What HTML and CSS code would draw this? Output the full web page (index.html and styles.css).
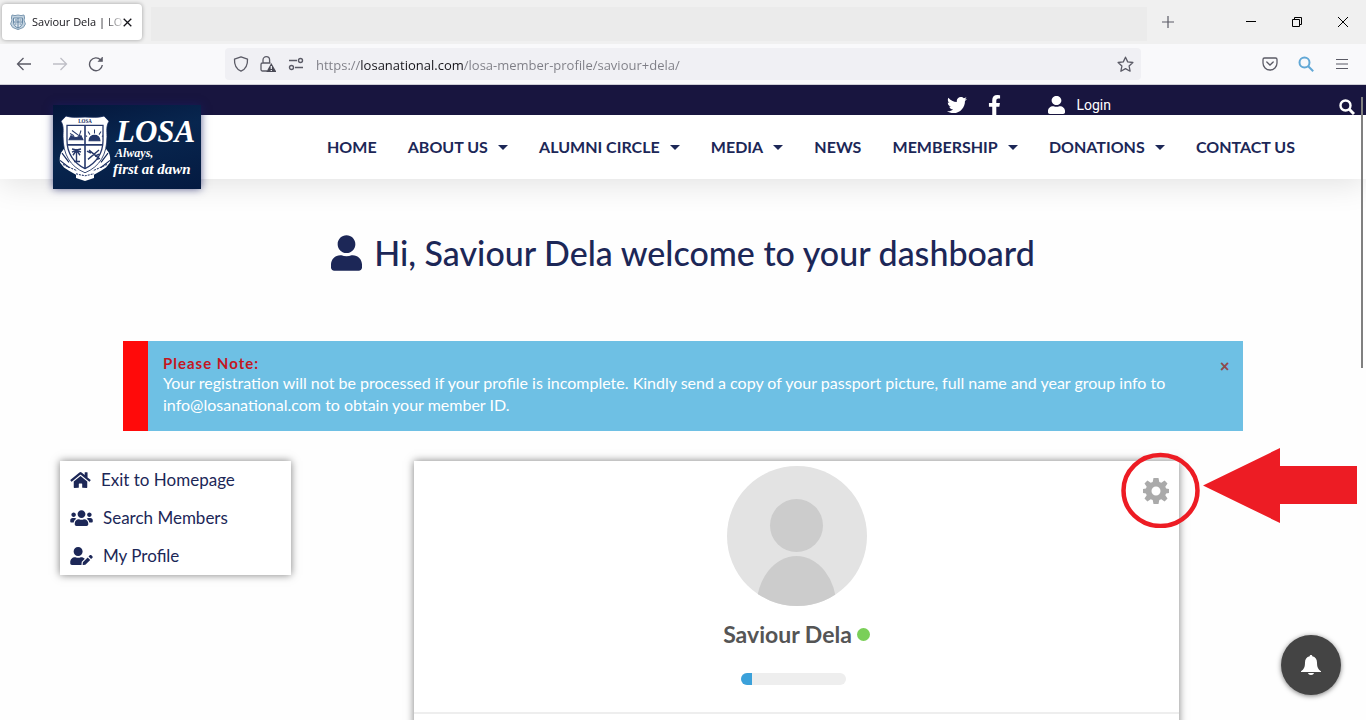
FILE: index.html
```html
<!DOCTYPE html>
<html lang="en">
<head>
<meta charset="utf-8">
<meta name="viewport" content="width=device-width, initial-scale=1">
<title>Saviour Dela | LOSA</title>
<link rel="stylesheet" href="styles.css">
</head>
<body>
<div class="tabstrip">
  <div class="tab">
    <svg class="favicon" viewBox="0 0 16 16" aria-hidden="true">
      <path d="M2 1l3 .6L8 1l3 .6L14 1l.6 3-.6 2 1.400 4-2 3.400L8 15.600l-5.400-2.200-2-3.400L2 6l-.6-2z" fill="#c3d3e0" stroke="#7d9ab2"/>
      <path d="M3.500 4h9v4c0 3-2 5-4.500 6C5.500 13 3.500 11 3.500 8z" fill="#e7eff5" stroke="#6889a6"/>
      <path d="M8 4v10M3.500 8h9M5 6h2M9.500 6h2M5 10h1.500M9.500 10h1.500" stroke="#5b7d9c"/>
    </svg>
    <span class="tab-title">Saviour Dela | LO</span>
    <button class="tab-close" aria-label="Close tab"><svg width="9" height="9" viewBox="0 0 9 9"><path d="M.7.7l7.600 7.600M8.300.7L.7 8.300" stroke="#15141a" stroke-width="1.300"/></svg></button>
  </div>
  <div class="tab-space"></div>
  <button class="chrome-btn new-tab" aria-label="New tab"><svg width="12" height="12" viewBox="0 0 12 12"><path d="M6 0v12M0 6h12" stroke="#5b5b66" stroke-width="1.200"/></svg></button>
  <div class="window-controls">
    <button class="chrome-btn" aria-label="Minimize"><svg width="10" height="10" viewBox="0 0 10 10"><path d="M0 4.500h10" stroke="#000"/></svg></button>
    <button class="chrome-btn" aria-label="Restore"><svg width="10" height="10" viewBox="0 0 10 10" fill="none" stroke="#000"><path d="M.5 2.500h7v7h-7zM2.500 2.500v-2h7v7h-2"/></svg></button>
    <button class="chrome-btn" aria-label="Close"><svg width="10" height="10" viewBox="0 0 10 10"><path d="M0 0l10 10M10 0L0 10" stroke="#000"/></svg></button>
  </div>
</div>

<div class="toolbar">
  <div class="history">
    <button class="chrome-btn" aria-label="Back"><svg width="16" height="16" viewBox="0 0 16 16" fill="none" stroke="#5b5b66" stroke-width="1.300"><path d="M15 8H1.500M7.500 2L1.500 8l6 6"/></svg></button>
    <button class="chrome-btn" aria-label="Forward"><svg width="16" height="16" viewBox="0 0 16 16" fill="none" stroke="#bfbfc6" stroke-width="1.300"><path d="M1 8h13.500M8.500 2l6 6-6 6"/></svg></button>
    <button class="chrome-btn" aria-label="Reload"><svg width="16" height="16" viewBox="0 0 16 16" fill="none" stroke="#5b5b66" stroke-width="1.400"><path d="M14.300 9A6.400 6.400 0 1 1 12.700 4"/><path d="M14.500 1v4.500H10z" fill="#5b5b66" stroke-width=".6"/></svg></button>
  </div>
  <div class="urlbar">
    <svg width="16" height="16" viewBox="0 0 16 16" fill="none" stroke="#5b5b66" stroke-width="1.300"><path d="M8 .8l6.500 2.300c.3 5.400-1.500 9.900-6.500 12.100C3 13 1.200 8.500 1.500 3.100z" stroke-linejoin="round"/></svg>
    <svg width="16" height="16" viewBox="0 0 16 16" fill="none" stroke="#5b5b66" stroke-width="1.300"><path d="M7 15H2.500a1.500 1.500 0 0 1-1.500-1.500v-5A1.500 1.500 0 0 1 2.500 7h8M3 7V4a3.300 3.300 0 0 1 6.600 0v3"/><path d="M11.300 7L16.500 16H6.300z" fill="#4a4a55" stroke="none"/><path d="M11.300 10v3M11.300 14v1" stroke="#f0f0f4"/></svg>
    <svg class="perm" width="16" height="16" viewBox="0 0 16 16" fill="none" stroke="#5b5b66" stroke-width="1.400"><path d="M1 4.500h8M7 11.500h8"/><circle cx="12.500" cy="4.500" r="2"/><circle cx="3.500" cy="11.500" r="2"/></svg>
    <input class="url" type="text" aria-label="Address" value="https://losanational.com/losa-member-profile/saviour+dela/">
    <button class="chrome-btn star" aria-label="Bookmark"><svg width="17" height="17" viewBox="0 0 17 17" fill="none" stroke="#5b5b66" stroke-width="1.300" stroke-linejoin="round"><path d="M8.500 1.200l2.200 4.700 5.200.6-3.800 3.500 1 5.200-4.600-2.600-4.600 2.600 1-5.200L1.100 6.500l5.200-.6z"/></svg></button>
  </div>
  <div class="tools">
    <button class="chrome-btn" aria-label="Pocket"><svg width="16" height="16" viewBox="0 0 16 16" fill="none" stroke="#5b5b66" stroke-width="1.300" stroke-linecap="round"><path d="M2.500 2h11A1.500 1.500 0 0 1 15 3.500V7A7 7 0 0 1 1 7V3.500A1.500 1.500 0 0 1 2.500 2zM4.800 6L8 9l3.200-3"/></svg></button>
    <button class="chrome-btn" aria-label="Search"><svg width="16" height="16" viewBox="0 0 16 16" fill="none" stroke="#62a8d6" stroke-width="2"><circle cx="6.500" cy="6.500" r="5"/><path d="M10 10l5.200 5.200"/></svg></button>
    <button class="chrome-btn" aria-label="Menu"><svg width="12" height="12" viewBox="0 0 12 12"><path d="M0 1.500h12M0 6h12M0 10.500h12" stroke="#5b5b66" stroke-width="1.200"/></svg></button>
  </div>
</div>

<div class="site">
  <header class="site-header">
    <div class="topbar">
      <a href="#" class="social" aria-label="Twitter"><svg width="20" height="20" viewBox="0 0 512 512" fill="#fff"><path d="M459.370 151.716c.325 4.548.325 9.097.325 13.645 0 138.720-105.583 298.558-298.558 298.558-59.452 0-114.680-17.219-161.137-47.106 8.447.974 16.568 1.299 25.340 1.299 49.055 0 94.213-16.568 130.274-44.832-46.132-.975-84.792-31.188-98.112-72.772 6.498.974 12.995 1.624 19.818 1.624 9.421 0 18.843-1.300 27.614-3.573-48.081-9.747-84.143-51.980-84.143-102.985v-1.299c13.969 7.797 30.214 12.670 47.431 13.319-28.264-18.843-46.781-51.005-46.781-87.391 0-19.492 5.197-37.360 14.294-52.954 51.655 63.675 129.300 105.258 216.365 109.807-1.624-7.797-2.599-15.918-2.599-24.040 0-57.828 46.782-104.934 104.934-104.934 30.213 0 57.502 12.670 76.670 33.137 23.715-4.548 46.456-13.320 66.599-25.340-7.798 24.366-24.366 44.833-46.132 57.827 21.117-2.273 41.584-8.122 60.426-16.243-14.292 20.791-32.161 39.308-52.628 54.253z"/></svg></a>
      <a href="#" class="social facebook" aria-label="Facebook"><svg width="13" height="21" viewBox="0 0 320 512" fill="#fff"><path d="M279.140 288l14.220-92.660h-88.910v-60.130c0-25.350 12.420-50.060 52.240-50.060h40.420V6.260S260.430 0 225.360 0c-73.220 0-121.080 44.380-121.080 124.720v70.620H22.890V288h81.390v224h100.170V288z"/></svg></a>
      <a href="#" class="login"><svg width="17" height="18" viewBox="0 0 448 512" preserveAspectRatio="none" fill="#fff"><path d="M224 256c70.700 0 128-57.300 128-128S294.700 0 224 0 96 57.300 96 128s57.300 128 128 128zm89.600 32h-16.700c-22.200 10.200-46.900 16-72.900 16s-50.600-5.800-72.900-16h-16.700C60.200 288 0 348.200 0 422.400V464c0 26.500 21.500 48 48 48h352c26.500 0 48-21.500 48-48v-41.600c0-74.200-60.200-134.400-134.400-134.400z"/></svg><span>Login</span></a>
      <button class="chrome-btn site-search" aria-label="Search site"><svg width="16" height="16" viewBox="0 0 16 16" fill="none" stroke="#fff" stroke-width="2.400"><circle cx="6.500" cy="6.500" r="5"/><path d="M10 10l5 5" stroke-width="3"/></svg></button>
    </div>
    <nav class="mainnav">
      <a href="#">HOME</a>
      <a href="#" class="has-menu">ABOUT US</a>
      <a href="#" class="has-menu">ALUMNI CIRCLE</a>
      <a href="#" class="has-menu">MEDIA</a>
      <a href="#">NEWS</a>
      <a href="#" class="has-menu">MEMBERSHIP</a>
      <a href="#" class="has-menu">DONATIONS</a>
      <a href="#">CONTACT US</a>
    </nav>
    <a href="#" class="logo">
      <svg class="crest" width="54" height="66" viewBox="0 0 54 64" preserveAspectRatio="none" aria-hidden="true">
        <path d="M10 30C3 34 1 39 2 46l4 5 5 3 7 4v3l9 3 9-3v-3l7-4 5-3 4-5c1-7-1-12-8-16z" fill="#fff"/>
        <path d="M4 37l7 9M2 44l9 7M50 37l-7 9M52 44l-9 7M7 33l5 6M47 33l-5 6" stroke="#12285a" stroke-width="1.200"/>
        <path d="M8 1c6 2 12 1 19 1s13 1 19-1l5 5c-3 5-2 9-2 15 0 17-7 29-22 35C12 50 5 38 5 21c0-6 1-10-2-15z" fill="#fff" stroke="#12285a" stroke-width=".8"/>
        <path d="M9 10h36v15c0 12-7 22-18 27C16 47 9 37 9 25z" fill="#fff" stroke="#26386b" stroke-width="1.300"/>
        <path d="M27 10v42M9 29h36" stroke="#26386b" stroke-width="1.600"/>
        <path d="M11 24h14l-2-4-5 2-5-2zM14 15l7 5M12 18l4 2M23 15l-2 6" fill="#26386b" stroke="#26386b"/>
        <path d="M31 25h11c0-7-11-7-11 0zM36.500 18v-4M32 19l-2-3M41 19l2-3M29 21l-1-1M44 21l1-1" fill="#26386b" stroke="#26386b"/>
        <path d="M18.500 45V34M14 36l4.500-2 4.500 2M14 33l4.500 1 4.500-1M15 39l3.500-5 3.500 5M16 45h6" fill="none" stroke="#26386b" stroke-width="1.400"/>
        <path d="M30 43l11-9M31 34l10 8M29 35l4 2M41 38l-4 2M39 43l3-1" stroke="#26386b" stroke-width="1.400"/>
        <path d="M5 48l14 6M49 48l-14 6M18 57l9 2 9-2" fill="none" stroke="#26386b" stroke-dasharray="2 1"/>
        <text class="crest-text" x="27" y="8" text-anchor="middle">LOSA</text>
      </svg>
      <span class="logo-words"><span class="logo-name">LOSA</span><span class="logo-motto">Always,</span><span class="logo-motto wide">first at dawn</span></span>
    </a>
  </header>

  <main>
    <h1 class="welcome"><svg width="31" height="36" viewBox="0 0 448 512" fill="#1c2757" aria-hidden="true"><path d="M224 256c70.700 0 128-57.300 128-128S294.700 0 224 0 96 57.300 96 128s57.300 128 128 128zm89.600 32h-16.700c-22.200 10.200-46.900 16-72.900 16s-50.600-5.800-72.900-16h-16.700C60.200 288 0 348.200 0 422.400V464c0 26.500 21.500 48 48 48h352c26.500 0 48-21.500 48-48v-41.600c0-74.200-60.200-134.400-134.400-134.400z"/></svg>Hi, Saviour Dela welcome to your dashboard</h1>

    <section class="notice">
      <div class="notice-body">
        <strong>Please Note:</strong>
        <p>Your registration will not be processed if your profile is incomplete. Kindly send a copy of your passport picture, full name and year group info to info@losanational.com to obtain your member ID.</p>
      </div>
      <button class="notice-close" aria-label="Dismiss">×</button>
    </section>

    <div class="columns">
      <aside class="side">
        <a href="#"><svg width="21" height="18" viewBox="0 0 576 512" fill="#1c2757"><path d="M280.400 148.300L96 300.100V464a16 16 0 0 0 16 16l112.100-.3a16 16 0 0 0 15.900-16V368a16 16 0 0 1 16-16h64a16 16 0 0 1 16 16v95.600a16 16 0 0 0 16 16.100L464 480a16 16 0 0 0 16-16V300L295.700 148.300a12.200 12.200 0 0 0-15.300 0zM571.600 251.500L488 182.600V44.100a12 12 0 0 0-12-12h-56a12 12 0 0 0-12 12v72.600L318.500 43a48 48 0 0 0-61 0L4.300 251.500a12 12 0 0 0-1.600 16.900l25.500 31a12 12 0 0 0 16.900 1.600l235.200-193.700a12.200 12.200 0 0 1 15.300 0L530.900 301a12 12 0 0 0 16.900-1.600l25.500-31a12 12 0 0 0-1.700-16.900z"/></svg>Exit to Homepage</a>
        <a href="#"><svg width="23" height="18" viewBox="0 0 640 512" fill="#1c2757"><path d="M96 224c35.300 0 64-28.700 64-64s-28.700-64-64-64-64 28.700-64 64 28.700 64 64 64zm448 0c35.300 0 64-28.700 64-64s-28.700-64-64-64-64 28.700-64 64 28.700 64 64 64zm32 32h-64c-17.600 0-33.500 7.100-45.100 18.600 40.300 22.100 68.900 62 75.100 109.400h66c17.700 0 32-14.300 32-32v-32c0-35.300-28.700-64-64-64zm-256 0c61.900 0 112-50.100 112-112S381.900 32 320 32 208 82.100 208 144s50.100 112 112 112zm76.800 32h-8.300c-20.800 10-43.900 16-68.500 16s-47.600-6-68.500-16h-8.300C179.600 288 128 339.600 128 403.200V432c0 26.500 21.500 48 48 48h288c26.500 0 48-21.500 48-48v-28.800c0-63.600-51.600-115.200-115.200-115.200zm-223.700-13.400C161.500 263.100 145.600 256 128 256H64c-35.300 0-64 28.700-64 64v32c0 17.700 14.300 32 32 32h65.900c6.300-47.400 34.900-87.300 75.200-109.400z"/></svg>Search Members</a>
        <a href="#"><svg width="23" height="18" viewBox="0 0 640 512" fill="#1c2757"><path d="M224 256c70.700 0 128-57.300 128-128S294.700 0 224 0 96 57.300 96 128s57.300 128 128 128zm89.600 32h-16.700c-22.200 10.200-46.900 16-72.900 16s-50.600-5.800-72.900-16h-16.700C60.200 288 0 348.200 0 422.400V464c0 26.500 21.500 48 48 48h274.900c-2.400-6.800-3.400-14-2.600-21.300l6.800-60.900 1.200-11.100 7.900-7.900 77.300-77.300c-24.500-27.700-60-45.500-99.900-45.500zm45.300 145.300l-6.800 61c-1.100 10.200 7.500 18.800 17.600 17.600l60.900-6.800 137.900-137.900-71.700-71.700zM633 268.900L595.100 231c-9.300-9.300-24.500-9.300-33.800 0l-41.800 41.800 71.800 71.700 41.700-41.800c9.300-9.400 9.300-24.500 0-33.800z"/></svg>My Profile</a>
      </aside>
      <section class="profile">
        <svg class="avatar" viewBox="0 0 140 140" role="img" aria-label="Profile photo"><circle cx="70" cy="70" r="70" fill="#e3e3e3"/><clipPath id="round"><circle cx="70" cy="70" r="70"/></clipPath><g fill="#ccc" clip-path="url(#round)"><circle cx="69.500" cy="59.500" r="26.500"/><ellipse cx="69.500" cy="141" rx="40" ry="51"/></g></svg>
        <h2 class="name">Saviour Dela<span class="online"></span></h2>
        <div class="meter" role="progressbar" aria-label="Profile completion" aria-valuenow="10" aria-valuemin="0" aria-valuemax="100"><div class="meter-fill"></div></div>
        <div class="profile-nav"></div>
        <button class="gear" aria-label="Profile settings"><svg width="26" height="26" viewBox="-13 -13 26 26" fill="#aaa"><path fill-rule="evenodd" d="M-2.500-13h5l.8 3.900 2 .8 3.300-2.200 2.900 2.900-2.200 3.300.8 1.800 2.900.5v4l-2.900.5-.8 1.800 2.200 3.300-2.900 2.900-3.300-2.200-2 .8-.8 3.900h-5l-.8-3.900-2-.8-3.300 2.200-2.900-2.900 2.200-3.300-.8-1.800-2.900-.5v-4l2.900-.5.8-1.800-2.200-3.300 2.900-2.900 3.300 2.200 2-.8zM4.500 0a4.500 4.500 0 1 0-9 0 4.500 4.500 0 1 0 9 0z"/></svg></button>
      </section>
    </div>
  </main>
  <div class="scroll-thumb"></div>
  <button class="bell" aria-label="Notifications"><svg width="20" height="20" viewBox="0 0 20 20" fill="#fff"><path d="M10 0c.9 0 1.300.5 1.300 1.200C14.500 1.900 16 4.300 16 7.500c0 4.600 1 6.700 4 8.800v.7H0v-.7c3-2.100 4-4.200 4-8.800 0-3.200 1.500-5.600 4.700-6.300C8.700.5 9.100 0 10 0zM7 18h6c-.3 1.300-1.400 2-3 2s-2.700-.7-3-2z"/></svg></button>
  <svg class="callout" width="236" height="80" viewBox="0 0 236 80" aria-hidden="true"><ellipse cx="39.500" cy="42.500" rx="37" ry="35.500" fill="none" stroke="#ed1c24" stroke-width="4.500"/><path d="M82 37.500L159 0v18h77v38h-77v19z" fill="#ed1c24"/></svg>
</div>
</body>
</html>
```

FILE: styles.css
```css
* { box-sizing: border-box; }

body {
  margin: 0;
  height: 100vh;
  display: flex;
  flex-direction: column;
  overflow: hidden;
  background: #fefefe;
  color: #1c2757;
  font-family: Lato, "Open Sans", sans-serif;
}

a { color: inherit; text-decoration: none; }
button { padding: 0; border: 0; background: none; cursor: pointer; }
svg { display: block; flex: none; }

/* Browser window */
.tabstrip {
  display: flex;
  align-items: center;
  height: 44px;
  padding: 0 0 0 2px;
  background: #f0f0f0;
}
.tab {
  display: flex;
  align-items: center;
  width: 140px;
  height: 36px;
  padding: 0 10px 0 8px;
  border-radius: 4px;
  background: #fff;
  box-shadow: 0 0 4px rgba(0, 0, 0, .35);
}
.favicon { width: 16px; height: 16px; }
.tab-title {
  flex: 1;
  margin-left: 6px;
  white-space: nowrap;
  color: #15141a;
  font: 11px/16px "Open Sans", sans-serif;
  -webkit-mask-image: linear-gradient(90deg, #000 80%, rgba(0, 0, 0, .15));
  mask-image: linear-gradient(90deg, #000 80%, rgba(0, 0, 0, .15));
}
.tab-close { display: grid; place-items: center; width: 10px; height: 16px; }
.tab-space { flex: 1; height: 34px; margin-left: 9px; margin-top: 4px; background: #ebebeb; }
.chrome-btn { display: grid; place-items: center; width: 36px; height: 32px; }
.new-tab { width: 41px; }
.window-controls { display: flex; margin-left: 40px; }
.window-controls .chrome-btn { width: 46px; }

.toolbar {
  display: flex;
  align-items: center;
  height: 41px;
  padding: 0 6px;
  border-bottom: 1px solid #cfcfd6;
  background: #f9f9fb;
}
.history, .tools { display: flex; }
.urlbar {
  display: flex;
  flex: 1;
  align-items: center;
  gap: 11px;
  height: 32px;
  margin: 0 111px;
  padding-left: 8px;
  border-radius: 4px;
  background: #f0f0f4;
}
.url {
  flex: 1;
  min-width: 0;
  padding: 2px 0 0;
  border: 0;
  outline: 0;
  color: #777780;
  font: 13px/20px "Open Sans", sans-serif;
  background: linear-gradient(90deg, #7d7d85 45px, #15141a 45px, #15141a 147px, #7d7d85 147px);
  -webkit-background-clip: text;
  background-clip: text;
  -webkit-text-fill-color: transparent;
}
.perm { margin: 0 1px; }
.urlbar .star { width: 32px; }

/* Site header */
.site { position: relative; flex: 1; min-height: 0; overflow: hidden; }
.site-header { position: relative; background: #fff; box-shadow: 0 4px 32px rgba(0, 0, 0, .12); }
.topbar {
  display: flex;
  justify-content: flex-end;
  align-items: flex-start;
  height: 30px;
  padding: 10px 11px 0 0;
  overflow: hidden;
  background: #18153f;
}
.facebook { margin-left: 21px; }
.login {
  display: flex;
  gap: 11px;
  margin-left: 47px;
  color: #fff;
  font: 14px/20px Roboto, sans-serif;
}
.login svg { margin-top: 1px; }
.site-search { width: 16px; height: 24px; margin-left: 228px; }
.mainnav {
  display: flex;
  justify-content: space-between;
  align-items: center;
  height: 64px;
  padding: 0 71px 2px 327px;
  font-size: 16px;
  font-weight: 700;
  white-space: nowrap;
}
.has-menu::after {
  content: "";
  display: inline-block;
  margin-left: 10px;
  vertical-align: 3px;
  border: 5px solid transparent;
  border-top-color: #1c2757;
  border-bottom: 0;
}
.logo {
  position: absolute;
  top: 20px;
  left: 53px;
  display: flex;
  align-items: center;
  gap: 1px;
  width: 148px;
  height: 84px;
  padding: 2px 2px 0 5px;
  background: linear-gradient(165deg, #04163b, #08264f 45%, #041a41);
  box-shadow: 0 0 8px rgba(24, 30, 100, .7);
  color: #fff;
  font-family: "Liberation Serif", serif;
  font-style: italic;
  font-weight: 700;
  white-space: nowrap;
}
.crest-text { font: 700 5px "Liberation Serif", serif; fill: #12285a; }
.logo-words { display: flex; flex-direction: column; }
.logo-name { margin-left: 3px; font-size: 31px; line-height: 30px; }
.logo-motto { margin-left: 2px; font-size: 12px; line-height: 12px; }
.logo-motto.wide { margin-left: 0; font-size: 15px; line-height: 20px; }

/* Dashboard */
.welcome {
  display: flex;
  justify-content: center;
  align-items: center;
  gap: 12px;
  margin: 48px 0 62px;
  font-size: 34px;
  font-weight: 500;
  line-height: 52px;
}
.notice {
  display: flex;
  align-items: flex-start;
  max-width: 1120px;
  margin: 0 auto 30px;
  padding: 13px 14px 15px 15px;
  border-left: 25px solid #ff0a0a;
  background: #6ec0e4;
  color: #fff;
  font-size: 16px;
  line-height: 22px;
}
.notice-body { flex: 1; padding-right: 20px; }
.notice strong { display: block; font-size: 15px; line-height: 18px; font-weight: 700; color: #c4161f; letter-spacing: 1px; }
.notice p { margin: 0; }
.notice-close { width: 9px; color: #8f4a4c; font: 700 16px/26px "Liberation Sans", sans-serif; }

.columns { display: flex; align-items: flex-start; gap: 123px; padding: 0 187px 0 60px; }
.side, .profile { background: #fff; box-shadow: 0 0 8px rgba(0, 0, 0, .5); }
.side { width: 231px; padding: 0 10px; font-size: 17px; line-height: 38px; }
.side a { display: flex; align-items: center; gap: 10px; }
.profile {
  position: relative;
  flex: 1;
  min-width: 0;
  display: flex;
  flex-direction: column;
  align-items: center;
  min-height: 400px;
  padding-top: 5px;
}
.avatar { width: 140px; height: 140px; }
.name {
  display: flex;
  align-items: center;
  gap: 5px;
  margin: 12px 0 23px;
  color: #555;
  font-size: 23px;
  font-weight: 700;
  line-height: 32px;
}
.online { width: 13px; height: 13px; border-radius: 50%; background: #7acf58; }
.meter { width: 105px; height: 12px; margin-right: 6px; border-radius: 6px; overflow: hidden; background: #eee; }
.meter-fill { width: 10%; height: 100%; background: #3ba1da; }
.profile-nav { align-self: stretch; margin-top: 27px; border-top: 2px solid #eee; }
.gear { position: absolute; top: 17px; right: 10px; width: 26px; height: 26px; }

/* Floating layers */
.scroll-thumb { position: absolute; top: 12px; right: 3px; width: 2px; height: 271px; background: #808080; }
.bell {
  position: absolute;
  right: 25px;
  bottom: 25px;
  display: grid;
  place-items: center;
  width: 60px;
  height: 60px;
  border-radius: 50%;
  background: #444;
  box-shadow: 0 1px 5px rgba(0, 0, 0, .5);
}
.callout { position: absolute; top: 363px; right: 9px; pointer-events: none; }
```
